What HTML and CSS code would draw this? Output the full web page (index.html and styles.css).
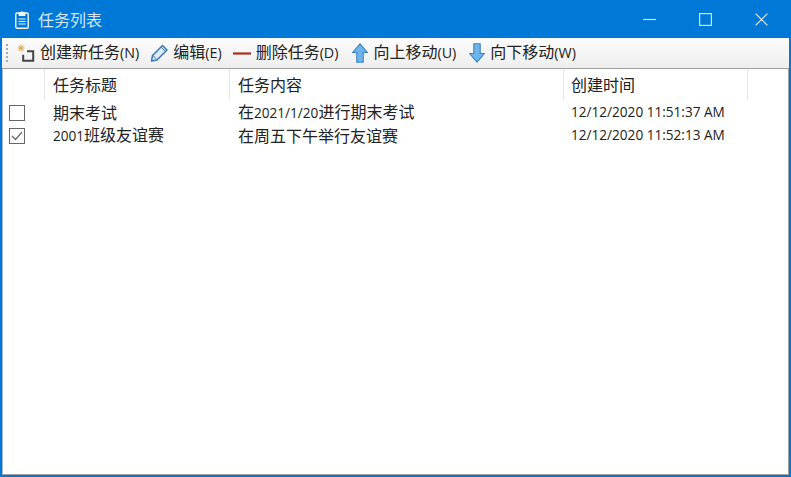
FILE: index.html
```html
<!DOCTYPE html>
<html lang="zh">
<head>
<meta charset="utf-8">
<title>任务列表</title>
<link rel="stylesheet" href="styles.css">
</head>
<body>
<div class="window">
  <header class="titlebar">
    <svg class="app-icon" width="14" height="19" viewBox="0 0 14 19" fill="none" stroke="#f4f4ef" stroke-width="1.4">
      <rect x=".8" y="3" width="12.400" height="15.200" rx="1.200"/>
      <path d="M4 5.500V2.500h1.800a1.300 1.300 0 0 1 2.400 0H10v3z" fill="#f4f4ef" stroke-width="1"/>
      <path d="M3.500 9h7M3.500 11.500h7M3.500 14h7" stroke-width="1.100"/>
    </svg>
    <span class="title">任务列表</span>
    <div class="controls">
      <button class="ctl"><svg width="13" height="13" viewBox="0 0 13 13"><path d="M0 6.500h13" stroke="#cfe3f7" stroke-width="1.200"/></svg></button>
      <button class="ctl"><svg width="13" height="13" viewBox="0 0 13 13" fill="none"><rect x=".6" y=".6" width="11.800" height="11.800" stroke="#cfe3f7" stroke-width="1.200"/></svg></button>
      <button class="ctl"><svg width="13" height="13" viewBox="0 0 13 13"><path d="M.6.6l11.800 11.800M12.400.6L.6 12.400" stroke="#e3eefa" stroke-width="1.200"/></svg></button>
    </div>
  </header>
  <nav class="toolbar">
    <span class="grip"></span>
    <span class="tool">
      <svg width="18" height="18" viewBox="0 0 18 18" fill="none">
        <path d="M10 7.200h6.200v9.600H6.200v-6" stroke="#444" stroke-width="2"/>
        <path d="M4 .5v7M.5 4h7M1.500 1.500l5 5M6.500 1.500l-5 5" stroke="#e2a23c" stroke-width="1"/>
      </svg>
      <span class="label">创建新任务<span class="lat">(N)</span></span>
    </span>
    <span class="tool">
      <svg width="18" height="18" viewBox="0 0 18 18" fill="none">
        <path d="M1.500 17l1-5.500L12.500 1.500 17 6 7 16z" fill="#dcebf8" stroke="#3f78b2" stroke-width="1.500" stroke-linejoin="round"/>
        <path d="M2.800 11.500l3.700 3.700M11 3l4.500 4.500" stroke="#3f78b2"/>
      </svg>
      <span class="label">编辑<span class="lat">(E)</span></span>
    </span>
    <span class="tool">
      <svg width="18" height="18" viewBox="0 0 18 18"><path d="M0 9.500h18" stroke="#a8301c" stroke-width="2.200"/></svg>
      <span class="label">删除任务<span class="lat">(D)</span></span>
    </span>
    <span class="tool arrow-up">
      <svg width="18" height="20" viewBox="0 0 18 20"><path d="M9 .8l7.500 8.700h-4.300v9.700H5.800V9.500H1.500z" fill="#6db4ea" stroke="#3a82c2" stroke-width="1.100" stroke-linejoin="round"/></svg>
      <span class="label">向上移动<span class="lat">(U)</span></span>
    </span>
    <span class="tool arrow-down">
      <svg width="18" height="20" viewBox="0 0 18 20"><path d="M9 19.200l7.500-8.700h-4.300V.8H5.800v9.700H1.500z" fill="#6db4ea" stroke="#3a82c2" stroke-width="1.100" stroke-linejoin="round"/></svg>
      <span class="label">向下移动<span class="lat">(W)</span></span>
    </span>
  </nav>
  <main class="list">
    <div class="head">
      <div class="hcell check-col"></div>
      <div class="hcell">任务标题</div>
      <div class="hcell">任务内容</div>
      <div class="hcell time-col">创建时间</div>
      <div class="hcell filler"></div>
    </div>
    <div class="row">
      <div class="cell check-col"><span class="box"></span></div>
      <div class="cell">期末考试</div>
      <div class="cell">在<span class="lat">2021/1/20</span>进行期末考试</div>
      <div class="cell lat time-col">12/12/2020 11:51:37 AM</div>
    </div>
    <div class="row">
      <div class="cell check-col"><span class="box"><svg width="14" height="14" viewBox="0 0 14 14" fill="none"><path d="M2 7l3.500 3.500L12 3" stroke="#666" stroke-width="1.200"/></svg></span></div>
      <div class="cell"><span class="lat">2001</span>班级友谊赛</div>
      <div class="cell">在周五下午举行友谊赛</div>
      <div class="cell lat time-col">12/12/2020 11:52:13 AM</div>
    </div>
  </main>
</div>
</body>
</html>
```
FILE: styles.css
```css
* { box-sizing: border-box; }
html, body { margin: 0; padding: 0; }
body {
  width: 791px;
  height: 477px;
  overflow: hidden;
  font-family: "Noto Sans CJK SC", "Open Sans", sans-serif;
  font-size: 16px;
  line-height: 20px;
  color: #222;
}
.lat { font-family: "Open Sans", "Noto Sans CJK SC", sans-serif; font-size: 13.6px; }
.window {
  width: 791px;
  height: 477px;
  display: flex;
  flex-direction: column;
  background: #0078d7;
  padding: 0 2px 2px 2px;
}
.titlebar {
  height: 38px;
  flex: none;
  display: flex;
  align-items: center;
  color: #d5e7f8;
  padding-left: 13px;
}
.app-icon { flex: none; }
.title { margin-left: 9px; }
.controls { margin-left: auto; display: flex; height: 100%; }
.ctl {
  width: 56px;
  height: 100%;
  padding: 0;
  border: 0;
  background: none;
  display: flex;
  align-items: center;
  justify-content: center;
}
.toolbar {
  height: 31px;
  flex: none;
  display: flex;
  align-items: center;
  background: linear-gradient(#fcfcfc, #eeeeee);
  border-bottom: 1px solid #a0a0a0;
  padding-left: 4px;
  gap: 11px;
}
.grip {
  width: 2px;
  height: 19px;
  background: repeating-linear-gradient(#a9a9a9 0 2px, transparent 2px 4px);
  margin-right: -2px;
}
.tool { display: flex; align-items: center; gap: 5px; white-space: nowrap; }
.tool svg { flex: none; }
.arrow-up { margin-left: 2px; gap: 4px; }
.arrow-down { margin-left: 1px; gap: 4px; }
.label { margin-bottom: 2px; }
.label .lat { font-size: 14.3px; }
.list {
  flex: 1;
  background: #fff;
  border: 1px solid #a0a0a0;
  border-top: 0;
  border-left-color: #a8b8c8;
}
.head { display: flex; height: 31px; }
.hcell {
  padding: 5px 0 0 8px;
  border-right: 1px solid #e6e6e6;
  width: 185px;
}
.head .hcell:nth-child(3) { width: 334px; }
.head .hcell:nth-child(4) { width: 184px; }
.head .check-col { width: 42px; padding: 0; }
.head .filler { border: 0; width: auto; flex: 1; }
.head .time-col, .row .time-col { padding-left: 7px; }
.row { display: flex; height: 23px; align-items: center; }
.cell { width: 185px; padding-left: 8px; white-space: nowrap; }
.cell:nth-child(3) { width: 334px; }
.row .check-col { width: 42px; padding: 2px 0 0 6px; }
.box {
  display: flex;
  width: 16px;
  height: 16px;
  border: 1px solid #666;
  background: #fff;
  align-items: center;
  justify-content: center;
}
```
